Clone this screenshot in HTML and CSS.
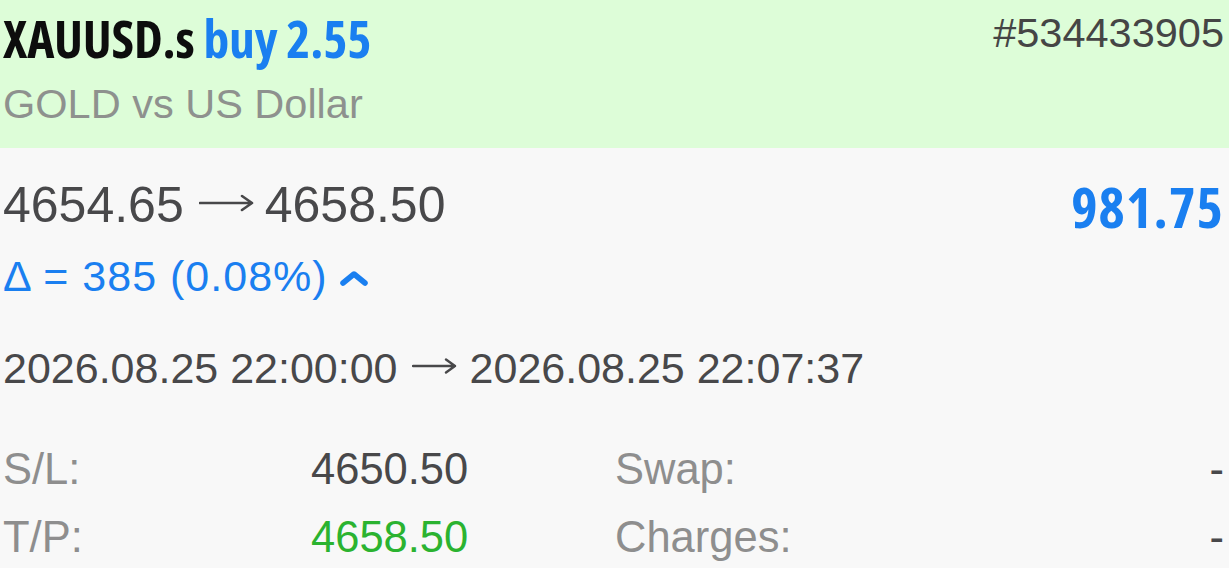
FILE: index.html
```html
<!DOCTYPE html>
<html>
<head>
<meta charset="utf-8">
<link rel="stylesheet" href="styles.css">
</head>
<body>
<div class="card">
  <header class="head">
    <div class="head-row">
      <div class="title"><span class="sym">XAUUSD.s</span> <span class="side">buy 2.55</span></div>
      <div class="ticket">#534433905</div>
    </div>
    <div class="desc">GOLD vs US Dollar</div>
  </header>
  <section class="body">
    <div class="price-row">
      <div class="prices">
        <div class="price-line">4654.65<svg class="arrow big" width="56" height="20" viewBox="0 0 56 20"><path d="M1 10H53M43 3L53 10L43 17" fill="none" stroke="#48484a" stroke-width="2.6" stroke-linecap="round" stroke-linejoin="round"/></svg>4658.50</div>
        <div class="delta">Δ = 385 (0.08%) <svg class="chev" width="28" height="18" viewBox="0 0 28 18"><polyline points="3,14 14,5 25,14" fill="none" stroke="#1a7ff0" stroke-width="5.5" stroke-linecap="round" stroke-linejoin="round"/></svg></div>
      </div>
      <div class="profit">981.75</div>
    </div>
    <div class="dates">2026.08.25 22:00:00<svg class="arrow small" width="46" height="18" viewBox="0 0 46 18"><path d="M1 9H43M34 2.5L43 9L34 15.5" fill="none" stroke="#48484a" stroke-width="2.4" stroke-linecap="round" stroke-linejoin="round"/></svg>2026.08.25 22:07:37</div>
    <div class="grid">
      <div class="lbl">S/L:</div><div class="val">4650.50</div><div class="lbl">Swap:</div><div class="val right">-</div>
      <div class="lbl">T/P:</div><div class="val green">4658.50</div><div class="lbl">Charges:</div><div class="val right">-</div>
    </div>
  </section>
</div>
</body>
</html>
```
FILE: styles.css
```css
html, body {
  margin: 0;
  padding: 0;
  background: #f8f8f8;
}
body {
  font-family: "Liberation Sans", Arial, sans-serif;
  overflow: hidden;
}
.card {
  width: 1229px;
}
.head {
  background: #ddfdd8;
  height: 148px;
  padding: 0 5px 0 3px;
  box-sizing: border-box;
}
.head-row {
  display: flex;
  justify-content: space-between;
  align-items: flex-start;
  height: 80px;
}
.title {
  font-family: "Open Sans", "DejaVu Sans Condensed", sans-serif;
  font-stretch: condensed;
  font-weight: 700;
  font-size: 51.5px;
  line-height: 60px;
  margin-top: 8px;
  letter-spacing: -0.2px;
}
.sym { color: #0d0d0d; }
.side { color: #1a7ff0; }
.ticket {
  font-size: 41.5px;
  line-height: 48px;
  margin-top: 9px;
  color: #454545;
}
.desc {
  font-size: 41.5px;
  line-height: 48px;
  color: #8e918e;
}
.body {
  padding: 27px 5px 0 3px;
}
.price-row {
  display: flex;
  justify-content: space-between;
  align-items: flex-start;
}
.price-line {
  font-size: 50px;
  line-height: 60px;
  color: #48484a;
}
.arrow {
  display: inline-block;
}
.arrow.big {
  margin: 0 10px 0 15px;
  vertical-align: 9px;
}
.arrow.small {
  margin: 0 12px 0 14px;
  vertical-align: 8px;
}
.delta {
  margin-top: 17px;
  font-size: 43px;
  line-height: 48px;
  letter-spacing: 1px;
  color: #1a7ff0;
  display: flex;
  align-items: center;
  gap: 12px;
}
.chev {
  display: block;
  margin-top: 4px;
}
.profit {
  font-family: "Open Sans", "DejaVu Sans Condensed", sans-serif;
  font-stretch: condensed;
  font-weight: 700;
  font-size: 56px;
  line-height: 60px;
  color: #1a7ff0;
  margin-top: 1px;
  letter-spacing: 1.2px;
}
.dates {
  margin-top: 43px;
  font-size: 43px;
  line-height: 50px;
  color: #48484a;
}
.grid {
  margin-top: 42px;
  display: grid;
  grid-template-columns: 308px 304px 1fr auto;
  grid-auto-rows: 68px;
  font-size: 43.5px;
  line-height: 68px;
}
.lbl { color: #8e8e8e; }
.val { color: #48484a; }
.val.green { color: #2bb330; }
.val.right { text-align: right; }
```
